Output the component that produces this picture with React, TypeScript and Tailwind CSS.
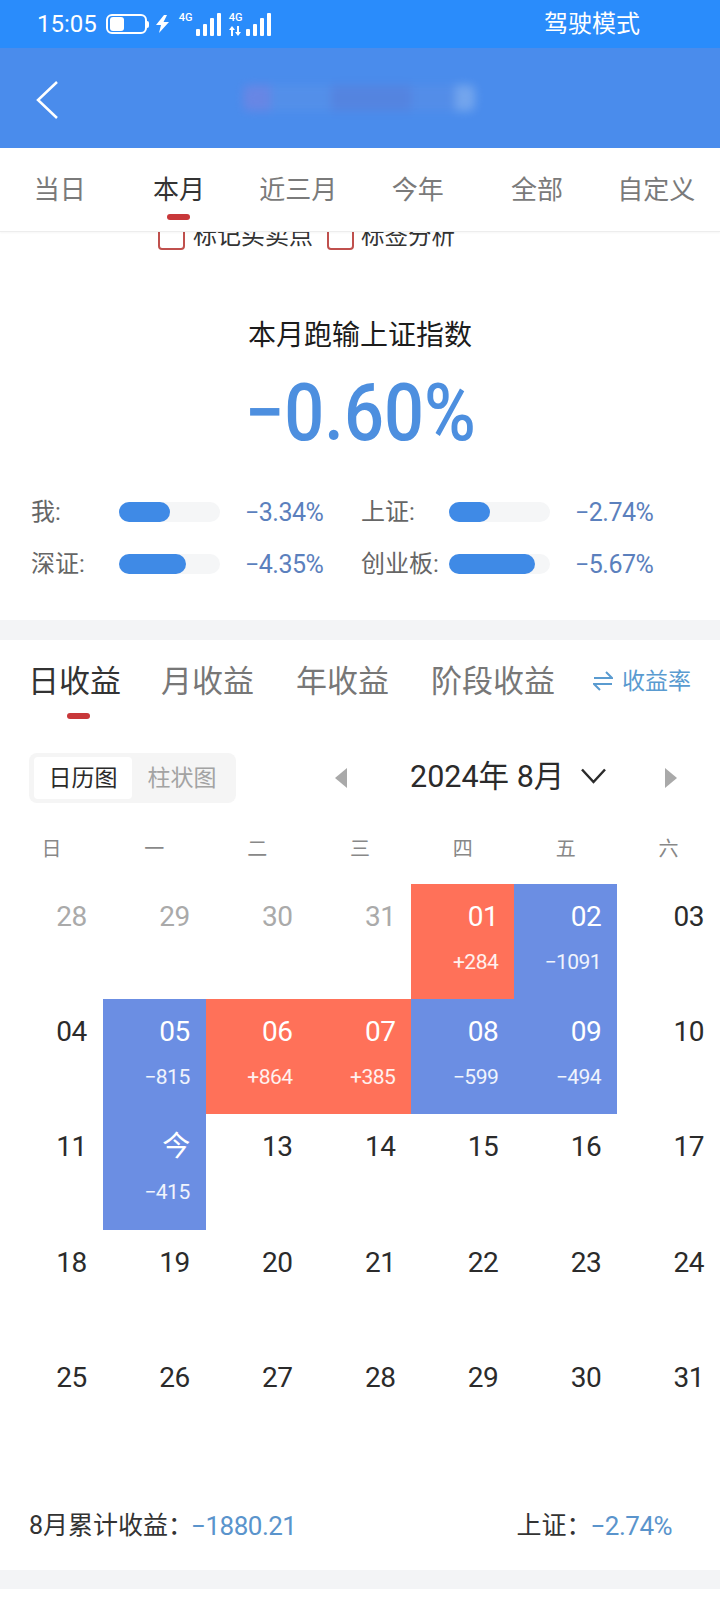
import React from "react";

const sans = "font-['Roboto','Noto_Sans_CJK_SC',sans-serif]";

const topTabs = ["当日", "本月", "近三月", "今年", "全部", "自定义"];
const weekDays = ["日", "一", "二", "三", "四", "五", "六"];

type Day = { label: string; value?: string; tone?: "up" | "down"; muted?: boolean };

const days: Day[] = [
  { label: "28", muted: true },
  { label: "29", muted: true },
  { label: "30", muted: true },
  { label: "31", muted: true },
  { label: "01", value: "+284", tone: "up" },
  { label: "02", value: "−1091", tone: "down" },
  { label: "03" },
  { label: "04" },
  { label: "05", value: "−815", tone: "down" },
  { label: "06", value: "+864", tone: "up" },
  { label: "07", value: "+385", tone: "up" },
  { label: "08", value: "−599", tone: "down" },
  { label: "09", value: "−494", tone: "down" },
  { label: "10" },
  { label: "11" },
  { label: "今", value: "−415", tone: "down" },
  { label: "13" },
  { label: "14" },
  { label: "15" },
  { label: "16" },
  { label: "17" },
  ...["18", "19", "20", "21", "22", "23", "24", "25", "26", "27", "28", "29", "30", "31"].map((label) => ({ label })),
];

const compare = [
  { label: "我:", fill: 51, value: "−3.34%" },
  { label: "上证:", fill: 41, value: "−2.74%" },
  { label: "深证:", fill: 67, value: "−4.35%" },
  { label: "创业板:", fill: 86, value: "−5.67%" },
];

function Signal({ arrows }: { arrows?: boolean }) {
  return (
    <div className="relative h-[24px] w-[45px] shrink-0">
      <span className="absolute left-0 -top-[1px] text-[11px] leading-[12px] font-medium text-white">4G</span>
      <svg width="45" height="24" viewBox="0 0 45 24" fill="white">
        {arrows ? (
          <>
            <path d="M0 17l3-4 3 4H4v6H2v-6z" />
            <path d="M6 19h2v-6h2v6h2l-3 4z" />
            <rect x="17" y="16" width="4" height="7" rx="1" />
            <rect x="24" y="11" width="4" height="12" rx="1" />
            <rect x="31" y="5" width="4" height="18" rx="1" />
            <rect x="38" y="0" width="4" height="23" rx="1" />
          </>
        ) : (
          <>
            <rect x="17" y="16" width="4" height="7" rx="1" />
            <rect x="24" y="11" width="4" height="12" rx="1" />
            <rect x="31" y="5" width="4" height="18" rx="1" />
            <rect x="38" y="0" width="4" height="23" rx="1" />
          </>
        )}
      </svg>
    </div>
  );
}

function StatusBar() {
  return (
    <div className="flex h-[48px] items-center bg-[#2a8cfb] pl-[37px] text-white">
      <span className="text-[24px] leading-none">15:05</span>
      <div className="ml-[9px] flex h-[20px] w-[41px] items-center rounded-[6px] border-2 border-white pl-[2px]">
        <div className="h-[14px] w-[14px] rounded-[3px] bg-white" />
      </div>
      <div className="h-[7px] w-[2px] rounded-r-sm bg-white" />
      <svg className="ml-[6px]" width="14" height="18" viewBox="0 0 14 18" fill="white">
        <path d="M9 0 1 10h5l-2 8 10-11H8.500L12 0z" />
      </svg>
      <div className="mt-[1px] ml-[10px] flex gap-[5px]">
        <Signal />
        <Signal arrows />
      </div>
      <span className="ml-auto mr-[80px] text-[24px] leading-none">驾驶模式</span>
    </div>
  );
}

function Header() {
  return (
    <div className="flex h-[100px] items-center bg-[#4a8cec] pl-[36px]">
      <svg className="mt-[4px]" width="22" height="38" viewBox="0 0 22 38" fill="none" stroke="white" strokeWidth="2.500">
        <path d="M21 1 2 19l19 18" />
      </svg>
      {/* title is smudged out in the source image */}
      <div className="ml-[185px] flex h-[26px] w-[232px] overflow-hidden rounded-md opacity-60 blur-[5px]">
        <div className="w-[28px] bg-[#7b83e0]" />
        <div className="w-[60px] bg-[#5a92e8]" />
        <div className="w-[80px] bg-[#5c7fd8]" />
        <div className="w-[44px] bg-[#5a8ee6]" />
        <div className="w-[20px] bg-[#8fb6ee]" />
      </div>
    </div>
  );
}

function TopTabs() {
  return (
    <div className="relative z-10 grid h-[84px] grid-cols-6 border-b border-[#ededed] bg-white pr-[4px] shadow-[0_1px_2px_rgba(0,0,0,0.04)]">
      {topTabs.map((tab) => (
        <div key={tab} className="relative flex justify-center pt-[25px]">
          <span className={`text-[26px] leading-[34px] ${tab === "本月" ? "text-[#333333]" : "text-[#7a7a7a]"}`}>{tab}</span>
          {tab === "本月" && <div className="absolute left-[48px] top-[66px] h-[6px] w-[23px] rounded-sm bg-[#c8383a]" />}
        </div>
      ))}
    </div>
  );
}

function MarkRow() {
  return (
    <div className="h-[18px] overflow-hidden">
      <div className="-mt-[10px] flex items-center pl-[158px] text-[24px] leading-[28px] text-[#333333]">
        <div className="h-[28px] w-[27px] rounded-[4px] border-2 border-[#c0504d]" />
        <span className="ml-[8px]">标记买卖点</span>
        <div className="ml-[14px] h-[28px] w-[27px] rounded-[4px] border-2 border-[#c0504d]" />
        <span className="ml-[7px] text-[23.500px]">标签分析</span>
      </div>
    </div>
  );
}

function Summary() {
  return (
    <div className="flex h-[370px] flex-col">
      <div className="mt-[68px] text-center text-[28px] leading-[36px] text-[#1c1c1c]">本月跑输上证指数</div>
      <div className="mt-[14px] text-center text-[80px] leading-[90px] font-medium text-[#4d8fdf]">
        <span className="inline-block scale-x-[0.88]">−0.60%</span>
      </div>
      <div className="mt-[44px] grid grid-cols-[330px_330px] gap-y-[32px] pl-[31px]">
        {compare.map((row) => (
          <div key={row.label} className="flex h-[20px] items-center">
            <span className="w-[88px] shrink-0 text-[24px] leading-none whitespace-nowrap text-[#666666]">{row.label}</span>
            <div className="h-[20px] w-[101px] shrink-0 rounded-full bg-[#f5f6f7]">
              <div className="h-[20px] rounded-full bg-[#3f8ae6]" style={{ width: row.fill }} />
            </div>
            <span className="ml-[25px] text-[25px] leading-none tracking-[-0.5px] text-[#5b80bd]">{row.value}</span>
          </div>
        ))}
      </div>
    </div>
  );
}

function EarningsTabs() {
  return (
    <div className="relative flex h-[82px] items-center pl-[28px] text-[31px] leading-none text-[#777777]">
      <span className="text-[#333333]">日收益</span>
      <span className="ml-[40px]">月收益</span>
      <span className="ml-[42px]">年收益</span>
      <span className="ml-[42px]">阶段收益</span>
      <svg className="ml-[38px]" width="20" height="20" viewBox="0 0 20 20" fill="none" stroke="#5a9bd0" strokeWidth="2">
        <path d="M1 7h18l-6-6M19 13H1l6 6" />
      </svg>
      <span className="ml-[9px] text-[23px] text-[#5a9bd0]">收益率</span>
      <div className="absolute left-[67px] top-[73px] h-[6px] w-[23px] rounded-sm bg-[#c8383a]" />
    </div>
  );
}

function MonthBar() {
  return (
    <div className="mt-[31px] flex h-[50px] items-center pl-[29px]">
      <div className="flex h-[50px] w-[207px] items-center rounded-lg bg-[#f5f5f5] pl-[5px] text-[23px] leading-none">
        <div className="flex h-[42px] w-[98px] items-center justify-center rounded-sm bg-white text-[#2b2b2b]">日历图</div>
        <div className="flex w-[100px] justify-center text-[#a3a3a3]">柱状图</div>
      </div>
      <svg className="ml-[98px]" width="14" height="22" viewBox="0 0 14 22" fill="#a9a9a9">
        <path d="M13 1v20L1 11z" />
      </svg>
      <span className="ml-[62px] -mt-[2px] w-[170px] text-[30.500px] leading-none whitespace-nowrap text-[#2b2b2b]">2024年 8月</span>
      <svg className="-mt-[4px] ml-[1px]" width="25" height="16" viewBox="0 0 25 16" fill="none" stroke="#2b2b2b" strokeWidth="2.500">
        <path d="M1 1.500 12.500 14 24 1.500" />
      </svg>
      <svg className="ml-[58px]" width="14" height="22" viewBox="0 0 14 22" fill="#a9a9a9">
        <path d="M1 1v20l12-10z" />
      </svg>
    </div>
  );
}

function Calendar() {
  return (
    <>
      <div className="mt-[29px] mb-[18px] grid h-[34px] grid-cols-7 items-center">
        {weekDays.map((d) => (
          <div key={d} className="text-center text-[20px] leading-none text-[#888888]">
            {d}
          </div>
        ))}
      </div>
      <div className="grid grid-cols-7 auto-rows-[115.200px]">
        {days.map((day, i) => (
          <div
            key={i}
            className={`flex flex-col items-end pr-[16px] pt-[15px] ${
              day.tone === "up" ? "bg-[#ff7159] text-white" : day.tone === "down" ? "bg-[#6b8ee3] text-white" : day.muted ? "text-[#aaaaaa]" : "text-[#2b2b2b]"
            }`}
          >
            <span className="text-[28px] leading-[36px] tracking-[-0.5px]">{day.label}</span>
            {day.value && <span className="mt-[13px] text-[21px] leading-[28px] tracking-[-0.5px] text-white/90">{day.value}</span>}
          </div>
        ))}
      </div>
    </>
  );
}

function Totals() {
  return (
    <div className="flex h-[110px] items-center pl-[29px] pt-[22px] text-[25px] leading-none text-[#333333]">
      <span>8月累计收益：</span>
      <span className="ml-[-2px] text-[26px] tracking-[-0.5px] text-[#5a94cc]">−1880.21</span>
      <span className="ml-[220px]">上证：</span>
      <span className="ml-[-1px] text-[26px] tracking-[-0.5px] text-[#5a94cc]">−2.74%</span>
    </div>
  );
}

export default function App() {
  return (
    <div className={`h-[1600px] w-[720px] overflow-hidden bg-white ${sans}`}>
      <StatusBar />
      <Header />
      <TopTabs />
      <MarkRow />
      <Summary />
      <div className="h-[20px] bg-[#f3f4f6]" />
      <EarningsTabs />
      <MonthBar />
      <Calendar />
      <Totals />
      <div className="h-[19px] bg-[#f3f4f6]" />
    </div>
  );
}
